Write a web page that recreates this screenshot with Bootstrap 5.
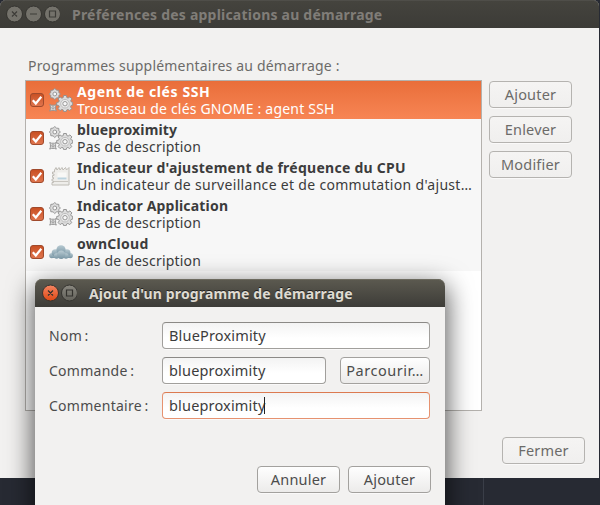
<!DOCTYPE html>
<html lang="fr">
<head>
<meta charset="utf-8">
<title>Préférences des applications au démarrage</title>
<meta name="viewport" content="width=device-width, initial-scale=1">
<link href="https://cdn.jsdelivr.net/npm/bootstrap@5.3.0/dist/css/bootstrap.min.css" rel="stylesheet">
<style>
  body { width: 600px; height: 505px; background: linear-gradient(90deg, transparent 483px, #3a3e48 483px, #3a3e48 484px, transparent 484px), #272a33; font: 14px/19px "Noto Sans", "Open Sans", sans-serif; color: #3c3c3c; }
  .main-window { width: 599px; height: 478px; background: #f2f1f0; border-radius: 6px 6px 0 0; }
  .titlebar { height: 28px; font-weight: 700; white-space: nowrap; gap: 12px; letter-spacing: .22px; }
  .titlebar svg, .entry svg { flex: none; }
  .main-window > .titlebar { background: linear-gradient(#45443e, #3c3b37); color: #807d78; padding-left: 6px; border-radius: 6px 6px 0 0; box-shadow: inset 0 1px #4f4e49; }
  .dialog > .titlebar { background: linear-gradient(#5c5a50, #3d3c38); color: #dfdbd2; padding-left: 7px; text-shadow: 0 -1px #22221f; border-radius: 7px 7px 0 0; box-shadow: inset 0 1px #6c6a5f; letter-spacing: .13px; }
  .main-body { padding: 28px 14px 0 25px; }
  .heading { height: 24px; padding-left: 3px; color: #6c6b69; letter-spacing: .2px; white-space: nowrap; }
  .list-box { width: 457px; height: 331px; border: 1px solid #b4b1ad; background: #fff; }
  .entry { height: 38px; background: #f7f7f7; padding-left: 4px; line-height: 17px; white-space: nowrap; letter-spacing: .2px; }
  .entry.on { background: linear-gradient(#e96e3a, #f78554); color: #fff; }
  .entry .icon { margin-left: 5px; margin-right: 4px; }
  .entry b { letter-spacing: .26px; }
  .entry b.wide { letter-spacing: .6px; }
  .entry b.tight { letter-spacing: .18px; }
  .desc-long { letter-spacing: .31px; }
  .side { gap: 8px; margin: 1px 0 0 7px; }
  .gbtn { height: 27px; width: 83px; padding: 0; font-size: 14.5px; line-height: 25px; letter-spacing: .2px; color: #4c4c4c; border: 1px solid #a3a19e; border-radius: 4px; background: linear-gradient(#fefefe, #ecebea); white-space: nowrap; box-shadow: 0 1px #fff9; }
  .gbtn.dim { color: #6c6b69; border-color: #b5b3b0; background: linear-gradient(#f5f4f3, #f0efee); }
  .gbtn.browse { width: 90px; letter-spacing: .55px; }
  .dialog { position: absolute; left: 35px; top: 279px; width: 410px; height: 240px; background: #f2f1f0; border-radius: 7px 7px 0 0; box-shadow: 0 8px 26px 2px #000a; }
  .dlg-body { padding: 15px 15px 0 14px; }
  .form-rows { gap: 8px; }
  .lbl { width: 113px; color: #4c4c4c; white-space: nowrap; letter-spacing: .27px; }
  .field { height: 27px; border: 1px solid #a19f9c; border-top-color: #8b8986; border-radius: 4px; background: linear-gradient(#f3f3f3, #fff 60%); padding-left: 6px; font-size: 14.5px; letter-spacing: .17px; white-space: nowrap; box-shadow: 0 1px #fff9; }
  .field.focus { border-color: #e69270; border-top-color: #dc7a50; }
  .cmd { width: 164px; }
  .caret { width: 1px; height: 17px; margin-left: -1px; background: #222; }
  .dlg-actions { gap: 8px; margin: 47px -1px 0 0; }
  .close-row { margin-top: 26px; }
  .sym { width: 0; height: 0; }
</style>
<script src="https://cdn.jsdelivr.net/npm/bootstrap@5.3.0/dist/js/bootstrap.bundle.min.js"></script>
</head>
<body class="overflow-hidden position-relative">
<svg class="sym position-absolute">
  <defs>
    <linearGradient id="ck" x2="0" y2="1"><stop stop-color="#c84f22"/><stop offset="1" stop-color="#e0764f"/></linearGradient>
    <linearGradient id="cl" x2="0" y2="1"><stop stop-color="#b8cad2"/><stop offset="1" stop-color="#7795a4"/></linearGradient>
    <linearGradient id="rd" x2="0" y2="1"><stop stop-color="#f58562"/><stop offset="1" stop-color="#dc4814"/></linearGradient>
    <linearGradient id="gy" x2="0" y2="1"><stop stop-color="#8a8880"/><stop offset="1" stop-color="#63625b"/></linearGradient>
    <symbol id="check" viewBox="0 0 14 14"><rect x=".5" y=".5" width="13" height="13" rx="2.5" fill="url(#ck)" stroke="#a04a2c"/><path d="M2.800 7.200l3 3.300L11.300 3.800" fill="none" stroke="#fff" stroke-width="2.200"/></symbol>
    <symbol id="gears" viewBox="0 0 24 24">
      <g fill="#dcdcdc" stroke="#8f8f8f" stroke-width=".9" stroke-linejoin="round">
        <path d="M14.600 7.500h2.800l.4 2 1.300.6 1.800-1.200 2 2-1.200 1.800.6 1.300 1.400.3v2.800l-1.700.4-.5 1.300 1.200 1.800-2 2-1.800-1.200-1.300.6-.4 1.600h-2.600l-.4-1.700-1.300-.5-1.800 1.200-2-2 1.200-1.800-.6-1.300-2-.4v-2.600l2-.4.6-1.300-1.200-1.800 2-2 1.800 1.200 1.300-.6z"/>
        <circle cx="16" cy="15.700" r="4.300" fill="#ebebeb" stroke="#bbb"/>
        <circle cx="16" cy="15.700" r="2.200" fill="#f8f8f8"/>
        <path d="M5.800.5l1.700 1.600 2.300.3.100 2.100 1.500 1.500-1.500 1.500-.1 2.200-2.300.2-1.700 1.600-1.700-1.600-2.300-.2-.1-2.200L.4 6l1.300-1.500.1-2.100 2.300-.3z"/>
        <circle cx="5.800" cy="6" r="1.900" fill="#f8f8f8"/>
        <path d="M.7 16.500l1.800.7h3l1.800-.7-.7 1.800v3l.7 1.800-1.800-.7h-3l-1.800.7.7-1.800v-3z"/>
        <circle cx="4" cy="19.800" r="1.100" fill="#f8f8f8"/>
      </g>
    </symbol>
    <symbol id="cpu" viewBox="0 0 24 24">
      <path d="M5.500 6L7 3.500 8 6l2-2.500L11 6l2-2.500L14 6l2.500-2.500L17.500 6l2.500-2.500V21H3v-2.500h1.500V17H3v-2h1.500v-1.500H3.500v-2H5V10H3.500V8h2z" fill="#eeedea" stroke="#bfbcb6" stroke-linejoin="round"/>
      <path d="M8.500 8.500h9v7.500h-9z" fill="#f8f8f6"/><path d="M8.500 13.500h9v2h-9z" fill="#bcd3de"/><path d="M5 17.500h14" stroke="#c9c6c0"/>
    </symbol>
    <symbol id="cloud" viewBox="0 0 24 24"><g fill="url(#cl)"><path d="M2 14h20v4H2z"/><circle cx="2.800" cy="15.600" r="2.600"/><circle cx="21.300" cy="15.600" r="2.600"/><circle cx="6.300" cy="12.800" r="3.600"/><circle cx="17.900" cy="12.800" r="3.600"/><circle cx="12" cy="9.800" r="4.600"/><circle cx="7.500" cy="16" r="2.700"/><circle cx="17" cy="16" r="2.700"/><circle cx="12.200" cy="14.800" r="4.200"/></g></symbol>
  </defs>
</svg>

<main class="main-window">
  <header class="titlebar d-flex align-items-center">
    <svg width="54" height="22" viewBox="0 0 54 22"><g fill="#74726b" stroke="#34332f"><circle cx="8.500" cy="11" r="8"/><circle cx="27.500" cy="11" r="8"/><circle cx="46.500" cy="11" r="8"/></g><path d="M6 8.500l5 5m0-5l-5 5M24 11h7M43.500 8h6v6h-6z" fill="none" stroke="#3d3c38" stroke-width="1.200"/></svg>
    <span>Préférences des applications au démarrage</span>
  </header>
  <div class="main-body">
    <div class="heading">Programmes supplémentaires au démarrage :</div>
    <div class="d-flex">
      <div class="list-box">
        <div class="entry on d-flex align-items-center"><svg width="14" height="14"><use href="#check"/></svg><svg class="icon" width="24" height="24"><use href="#gears"/></svg><div><b class="wide">Agent de clés SSH</b><br>Trousseau de clés GNOME : agent SSH</div></div>
        <div class="entry d-flex align-items-center"><svg width="14" height="14"><use href="#check"/></svg><svg class="icon" width="24" height="24"><use href="#gears"/></svg><div><b class="tight">blueproximity</b><br>Pas de description</div></div>
        <div class="entry d-flex align-items-center"><svg width="14" height="14"><use href="#check"/></svg><svg class="icon" width="24" height="24"><use href="#cpu"/></svg><div><b>Indicateur d'ajustement de fréquence du CPU</b><br><span class="desc-long">Un indicateur de surveillance et de commutation d'ajust…</span></div></div>
        <div class="entry d-flex align-items-center"><svg width="14" height="14"><use href="#check"/></svg><svg class="icon" width="24" height="24"><use href="#gears"/></svg><div><b class="tight">Indicator Application</b><br>Pas de description</div></div>
        <div class="entry d-flex align-items-center"><svg width="14" height="14"><use href="#check"/></svg><svg class="icon" width="24" height="24"><use href="#cloud"/></svg><div><b>ownCloud</b><br>Pas de description</div></div>
      </div>
      <div class="side d-flex flex-column">
        <button class="btn gbtn dim">Ajouter</button>
        <button class="btn gbtn dim">Enlever</button>
        <button class="btn gbtn dim">Modifier</button>
      </div>
    </div>
    <div class="close-row d-flex justify-content-end"><button class="btn gbtn dim">Fermer</button></div>
  </div>
</main>

<section class="dialog">
  <header class="titlebar d-flex align-items-center">
    <svg width="35" height="22" viewBox="0 0 35 22"><circle cx="8.500" cy="11" r="8" fill="url(#rd)" stroke="#34332f"/><circle cx="27.500" cy="11" r="8" fill="url(#gy)" stroke="#34332f"/><path d="M6 8.500l5 5m0-5l-5 5M24.500 8h6v6h-6z" fill="none" stroke="#33322e" stroke-width="1.200"/></svg>
    <span>Ajout d'un programme de démarrage</span>
  </header>
  <div class="dlg-body">
    <div class="form-rows d-flex flex-column">
      <div class="d-flex align-items-center"><div class="lbl">Nom&#8201;:</div><div class="field flex-fill d-flex align-items-center">BlueProximity</div></div>
      <div class="d-flex align-items-center"><div class="lbl">Commande&#8201;:</div><div class="field cmd d-flex align-items-center">blueproximity</div><button class="btn gbtn browse ms-auto">Parcourir…</button></div>
      <div class="d-flex align-items-center"><div class="lbl">Commentaire&#8201;:</div><div class="field focus flex-fill d-flex align-items-center">blueproximity<span class="caret"></span></div></div>
    </div>
    <div class="dlg-actions d-flex justify-content-end"><button class="btn gbtn">Annuler</button><button class="btn gbtn">Ajouter</button></div>
  </div>
</section>
</body>
</html>
